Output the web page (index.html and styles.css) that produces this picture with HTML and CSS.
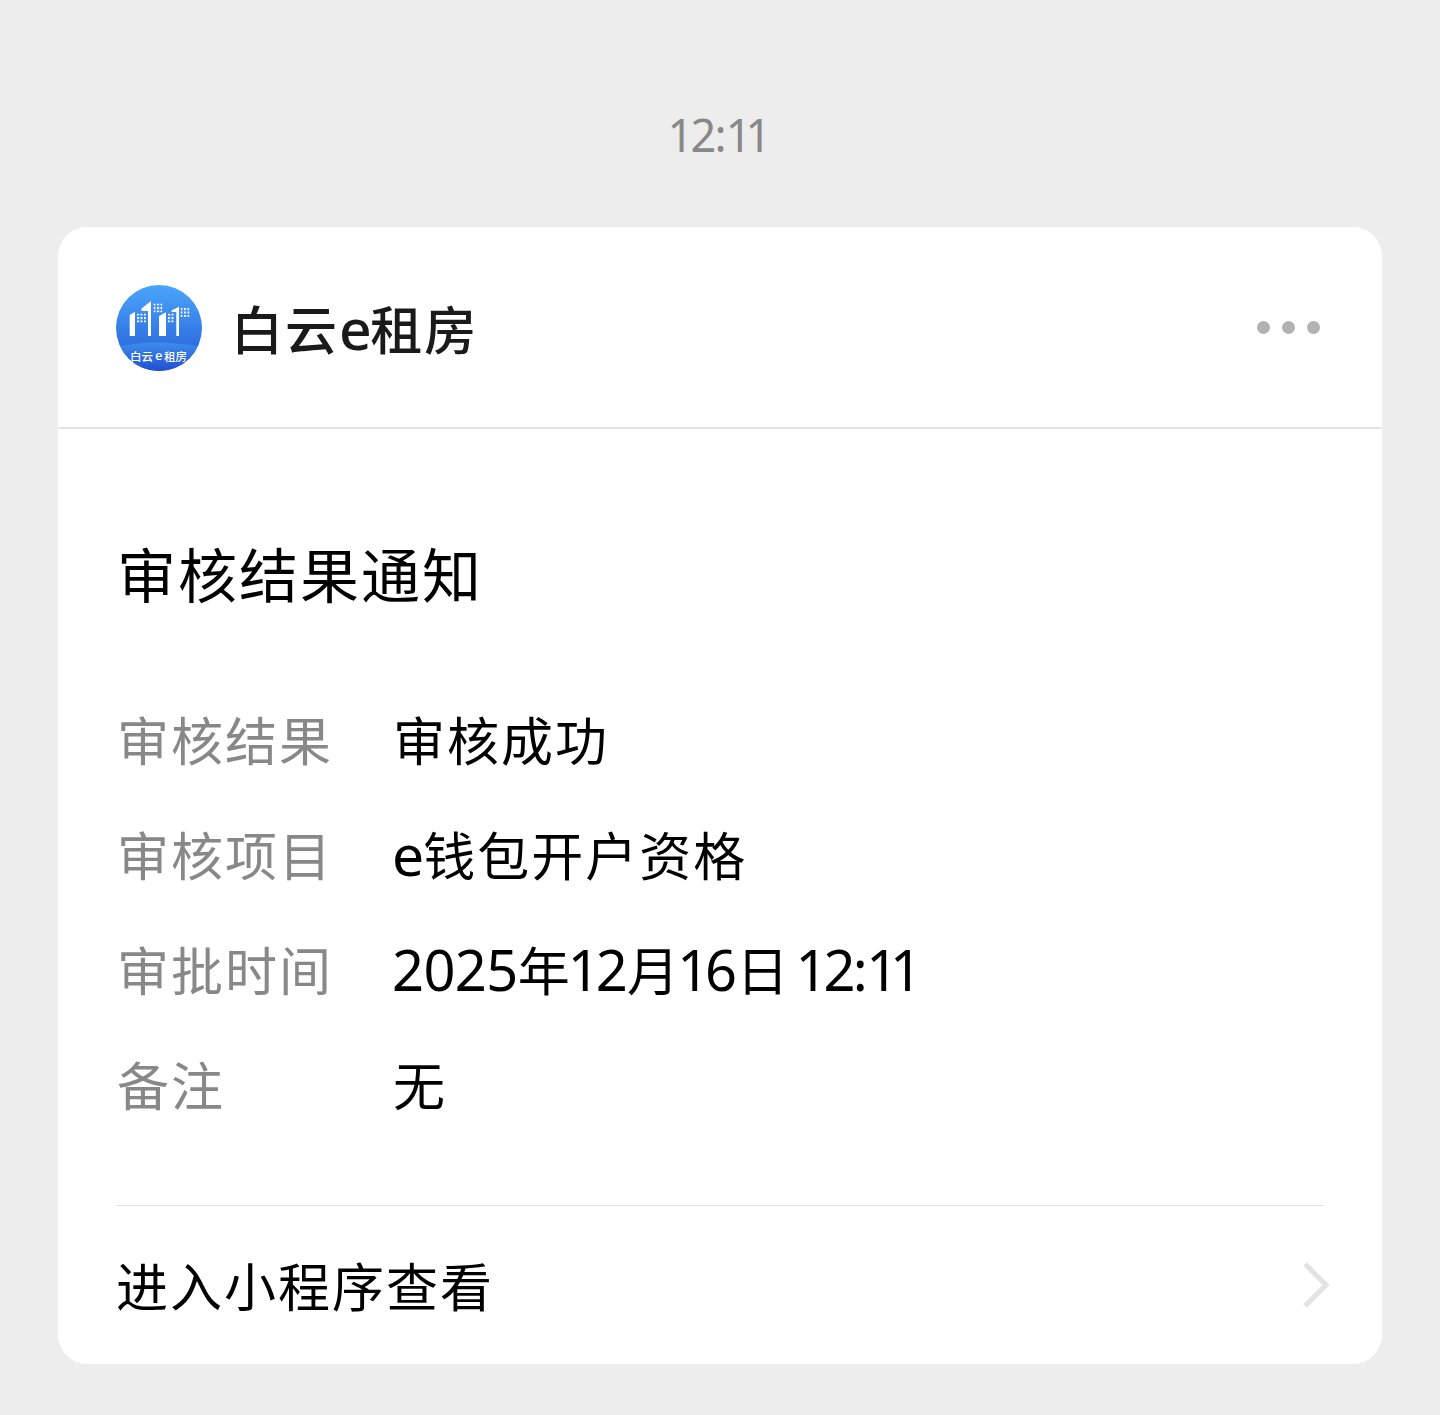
FILE: index.html
```html
<!DOCTYPE html>
<html lang="zh-CN">
<head>
<meta charset="utf-8">
<title>审核结果通知</title>
<link rel="stylesheet" href="styles.css">
</head>
<body>
<main class="chat">
  <time class="timestamp"><span class="one">1</span>2<span class="colon">:</span><span class="one">1</span><span class="one">1</span></time>
  <article class="card">
    <header class="card-header">
      <svg class="logo" viewBox="0 0 86 86" aria-hidden="true">
        <defs>
          <linearGradient id="sky" x1="0" y1="0" x2="0" y2="1"><stop offset="0" stop-color="#4aa5fb"/><stop offset="1" stop-color="#2459d4"/></linearGradient>
          <linearGradient id="hill" x1="0" y1="0" x2="0" y2="1"><stop offset="0" stop-color="#3f8cec"/><stop offset="1" stop-color="#1f4fd0"/></linearGradient>
          <clipPath id="disc"><circle cx="43" cy="43" r="43"/></clipPath>
          <pattern id="win" width="3.5" height="3.5" patternUnits="userSpaceOnUse"><rect width="2" height="2" fill="#fff"/></pattern>
        </defs>
        <g clip-path="url(#disc)">
          <rect width="86" height="86" fill="url(#sky)"/>
          <path d="M0 62Q40 53 86 62V86H0Z" fill="url(#hill)"/>
        </g>
        <path fill="#fff" d="M13.7 30 19 26.7V51H13.7ZM25.5 26V23.5L35 16V51H32V26ZM43 31 50 27.3V51H43ZM55.5 27V25.5L63 21.7V51H60.3V27Z"/>
        <g fill="url(#win)">
          <rect width="9" height="9" transform="translate(21 28.5)"/>
          <rect width="9" height="9" transform="translate(37.5 18.5)"/>
          <rect width="7" height="9" transform="translate(52 28.5)"/>
          <rect width="9" height="9" transform="translate(64.5 23)"/>
        </g>
        <text class="logo-text" x="14" y="75.5">白云</text>
        <text class="logo-text logo-e" x="39" y="75">e</text>
        <text class="logo-text" x="48" y="75.5">租房</text>
      </svg>
      <h1 class="name">白云<span class="latin">e</span>租房</h1>
      <div class="more"><i></i><i></i><i></i></div>
    </header>
    <section class="card-body">
      <h2 class="title">审核结果通知</h2>
      <dl class="fields">
        <dt>审核结果</dt><dd>审核成功</dd>
        <dt>审核项目</dt><dd><span class="latin">e</span>钱包开户资格</dd>
        <dt>审批时间</dt><dd><span class="num">2025</span>年<span class="num"><span class="one">1</span>2</span>月<span class="num"><span class="one">1</span>6</span>日<span class="num clock"><span class="one">1</span>2<span class="colon">:</span><span class="one">1</span><span class="one">1</span></span></dd>
        <dt>备注</dt><dd>无</dd>
      </dl>
      <footer class="enter">
        <span class="enter-label">进入小程序查看</span>
        <svg class="chevron" viewBox="0 0 28 48" aria-hidden="true"><path d="M3 3 24 24 3 45" fill="none" stroke="#e3e3e3" stroke-width="5"/></svg>
      </footer>
    </section>
  </article>
</main>
</body>
</html>
```
FILE: styles.css
```css
* { box-sizing: border-box; margin: 0; padding: 0; }
body {
  background: #ededed;
  color: #000;
  font-family: "Noto Sans CJK SC", sans-serif;
  height: 1415px;
}
.chat { display: flex; flex-direction: column; padding: 105px 58px 0; }
.timestamp {
  font: 45px/60px "Noto Sans", sans-serif;
  color: #888;
  text-align: center;
  height: 122px;
  padding-right: 1px;
}
.one { display: inline-block; margin-left: -0.07em; margin-right: -0.065em; }
.colon { display: inline-block; margin-left: -0.035em; margin-right: 0.05em; }
.card { background: #fff; border-radius: 29px; height: 1137px; }
.card-header {
  display: flex;
  align-items: center;
  height: 202px;
  padding: 1px 62px 0 58px;
  border-bottom: 2px solid #e3e3e3;
}
.logo { width: 86px; height: 86px; }
.logo-text { font-size: 11.5px; font-weight: 500; fill: #fff; }
.logo-e { font-family: "Noto Sans", sans-serif; font-size: 13px; }
.name {
  margin-left: 29px;
  font-size: 52px;
  font-weight: 500;
  letter-spacing: 2px;
  line-height: 78px;
  color: #1a1a1a;
}
.latin { font-family: "Noto Sans", sans-serif; font-size: 57px; letter-spacing: -1px; line-height: 1; }
.name .latin { letter-spacing: -1.5px; }
.more { display: flex; gap: 12px; margin-left: auto; }
.more i { width: 13px; height: 13px; border-radius: 50%; background: #b2b2b2; }
.card-body { padding: 102px 58px 0; }
.title { padding-left: 1px; font-size: 59px; font-weight: 400; letter-spacing: 2px; line-height: 84px; }
.fields {
  display: grid;
  grid-template-columns: 276px 1fr;
  grid-auto-rows: 115px;
  margin-top: 66px;
  padding-left: 1px;
  font-size: 52px;
  letter-spacing: 2px;
  line-height: 115px;
}
.fields dt { color: #888; }
.fields dd { white-space: nowrap; }
.num { font-family: "Noto Sans", sans-serif; font-size: 56px; letter-spacing: -0.6px; line-height: 1; }
.clock { margin-left: 9px; }
.fields .latin, .fields .num:first-child { margin-left: -1px; }
.enter {
  display: flex;
  align-items: center;
  justify-content: space-between;
  margin-top: 64px;
  height: 159px;
  border-top: 1px solid #e3e3e3;
  font-size: 52px;
  letter-spacing: 2px;
}
.enter-label { padding-bottom: 2px; }
.chevron { width: 28px; height: 48px; margin-right: -6px; }
```
